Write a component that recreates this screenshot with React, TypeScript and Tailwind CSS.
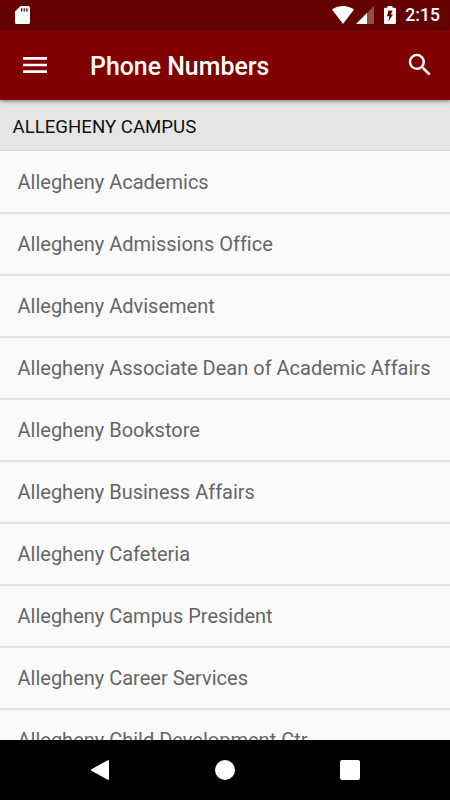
const phoneNumbers = [
  'Allegheny Academics',
  'Allegheny Admissions Office',
  'Allegheny Advisement',
  'Allegheny Associate Dean of Academic Affairs',
  'Allegheny Bookstore',
  'Allegheny Business Affairs',
  'Allegheny Cafeteria',
  'Allegheny Campus President',
  'Allegheny Career Services',
  'Allegheny Child Development Ctr',
];

function StatusBar() {
  return (
    <div className="flex h-[30px] shrink-0 items-center bg-[#640000] pl-[15px] pr-[10px] text-white">
      {/* SD card */}
      <svg width="15" height="18" viewBox="0 0 15 18" fill="currentColor">
        <path
          fillRule="evenodd"
          d="M5.6 0H13.5A1.5 1.5 0 0 1 15 1.5V16.5A1.5 1.5 0 0 1 13.5 18H1.5A1.5 1.5 0 0 1 0 16.5V5.6ZM6 2.2V5.6H7.3V2.2ZM8.6 2.2V5.6H9.9V2.2ZM11.2 2.2V5.6H12.6V2.2Z"
        />
      </svg>

      <div className="ml-auto flex items-center">
        {/* Wifi */}
        <svg width="22" height="18" viewBox="0 0 22 18" fill="currentColor">
          <path d="M11 18L0 3.6C3.1 1.2 6.9 0 11 0S18.9 1.2 22 3.6Z" />
        </svg>
        {/* Cell signal */}
        <svg className="ml-[2px]" width="18" height="18" viewBox="0 0 18 18" fill="currentColor">
          <path d="M0 18L18 0V18Z" fillOpacity="0.3" />
          <path d="M0 18L11 7V18Z" />
        </svg>
        {/* Battery */}
        <svg className="ml-[10px]" width="12" height="18" viewBox="0 0 12 18" fill="currentColor">
          <path
            fillRule="evenodd"
            d="M3.5 0H8.5V1.8H11A1 1 0 0 1 12 2.8V17A1 1 0 0 1 11 18H1A1 1 0 0 1 0 17V2.8A1 1 0 0 1 1 1.8H3.5ZM4.5 4.6L3 10.2H5.4L4.3 15.6L9 8.6H6.8L8.6 4.6Z"
          />
        </svg>
        <span className="ml-[9px] pt-px text-[17.5px] leading-[29px] font-medium tracking-[0.1px]">2:15</span>
      </div>
    </div>
  );
}

function AppBar() {
  return (
    <header className="relative z-10 flex h-[70px] shrink-0 items-center bg-[#800000] pl-[19px] pr-[15px] text-white shadow-[0_1px_4px_rgba(0,0,0,0.5)]">
      <svg width="32" height="32" viewBox="0 0 24 24" fill="currentColor">
        <path d="M3 18h18v-2H3v2zm0-5h18v-2H3v2zm0-7v2h18V6H3z" />
      </svg>
      <h1 className="ml-[39px] pt-[4px] text-[24.9px] leading-[30px] font-medium">Phone Numbers</h1>
      <svg className="ml-auto" width="30" height="30" viewBox="0 0 24 24" fill="currentColor">
        <path d="M15.5 14h-.79l-.28-.27A6.471 6.471 0 0 0 16 9.5 6.5 6.5 0 1 0 9.5 16c1.61 0 3.09-.59 4.23-1.57l.27.28v.79l5 4.99L20.49 19l-4.99-5zm-6 0C7.01 14 5 11.99 5 9.5S7.01 5 9.5 5 14 7.01 14 9.5 11.99 14 9.5 14z" />
      </svg>
    </header>
  );
}

function NavBar() {
  return (
    <nav className="flex h-[60px] shrink-0 items-center justify-between bg-black px-[90px] text-white">
      <svg width="20" height="20" viewBox="0 0 20 20" fill="currentColor">
        <path d="M17.7 0.2Q19 -0.3 19 1V19Q19 20.3 17.7 19.8L1.5 10.8Q0.5 10 1.5 9.2Z" />
      </svg>
      <div className="size-5 rounded-full bg-white" />
      <div className="size-5 rounded-[2px] bg-white" />
    </nav>
  );
}

export default function App() {
  return (
    <div className="flex h-[800px] w-[450px] flex-col overflow-hidden bg-[#fafafa] font-['Roboto',sans-serif] [font-variant-ligatures:none]">
      <StatusBar />
      <AppBar />
      <main className="min-h-0 flex-1 overflow-hidden">
        <h2 className="h-[51px] border-b border-[#d9d9d9] bg-[#e5e5e5] pl-[12.5px] pt-px text-[18.65px] leading-[52px] text-[#111]">
          ALLEGHENY CAMPUS
        </h2>
        <ul className="pt-px">
          {phoneNumbers.map((name) => (
            <li
              key={name}
              className="h-[62px] border-b-2 border-[#e3e3e3] pl-[17.5px] text-[20px] leading-[61px] whitespace-nowrap text-[#666]"
            >
              {name}
            </li>
          ))}
        </ul>
      </main>
      <NavBar />
    </div>
  );
}
